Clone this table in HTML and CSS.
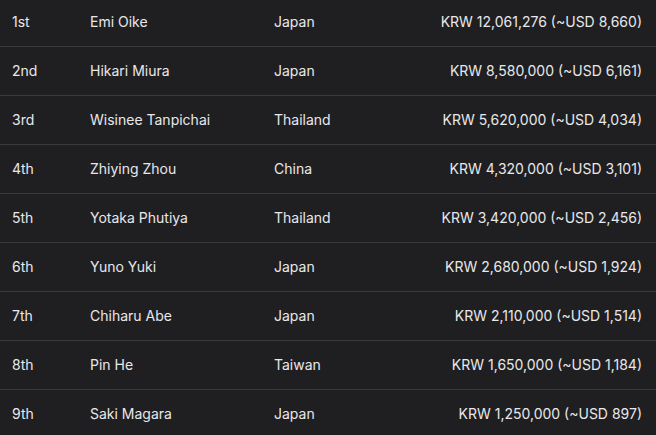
FILE: index.html
```html
<!DOCTYPE html>
<html>
<head>
<meta charset="utf-8">
<link rel="stylesheet" href="styles.css">
</head>
<body>
<table class="results">
<tbody>
<tr><td class="rank">1st</td><td class="name">Emi Oike</td><td class="country">Japan</td><td class="prize">KRW 12,061,276 (~USD 8,660)</td></tr>
<tr><td class="rank">2nd</td><td class="name">Hikari Miura</td><td class="country">Japan</td><td class="prize">KRW 8,580,000 (~USD 6,161)</td></tr>
<tr><td class="rank">3rd</td><td class="name">Wisinee Tanpichai</td><td class="country">Thailand</td><td class="prize">KRW 5,620,000 (~USD 4,034)</td></tr>
<tr><td class="rank">4th</td><td class="name">Zhiying Zhou</td><td class="country">China</td><td class="prize">KRW 4,320,000 (~USD 3,101)</td></tr>
<tr><td class="rank">5th</td><td class="name">Yotaka Phutiya</td><td class="country">Thailand</td><td class="prize">KRW 3,420,000 (~USD 2,456)</td></tr>
<tr><td class="rank">6th</td><td class="name">Yuno Yuki</td><td class="country">Japan</td><td class="prize">KRW 2,680,000 (~USD 1,924)</td></tr>
<tr><td class="rank">7th</td><td class="name">Chiharu Abe</td><td class="country">Japan</td><td class="prize">KRW 2,110,000 (~USD 1,514)</td></tr>
<tr><td class="rank">8th</td><td class="name">Pin He</td><td class="country">Taiwan</td><td class="prize">KRW 1,650,000 (~USD 1,184)</td></tr>
<tr><td class="rank">9th</td><td class="name">Saki Magara</td><td class="country">Japan</td><td class="prize">KRW 1,250,000 (~USD 897)</td></tr>
</tbody>
</table>
</body>
</html>
```
FILE: styles.css
```css
html, body {
  margin: 0;
  padding: 0;
  background: #1f1f22;
  overflow: hidden;
}
body {
  font-family: Inter, "Liberation Sans", sans-serif;
  font-size: 14px;
  color: #e8e8ea;
}
.results {
  width: 656px;
  border-collapse: collapse;
  margin-top: -3px;
  table-layout: fixed;
}
.results tr {
  height: 49px;
  border-bottom: 1px solid #3a3a3e;
}
.results td {
  padding: 0;
  vertical-align: middle;
  white-space: nowrap;
}
.rank { width: 90px; padding-left: 12px !important; box-sizing: border-box; }
.name { width: 184px; }
.country { width: 160px; }
.prize { text-align: right; padding-right: 14px !important; }
```
